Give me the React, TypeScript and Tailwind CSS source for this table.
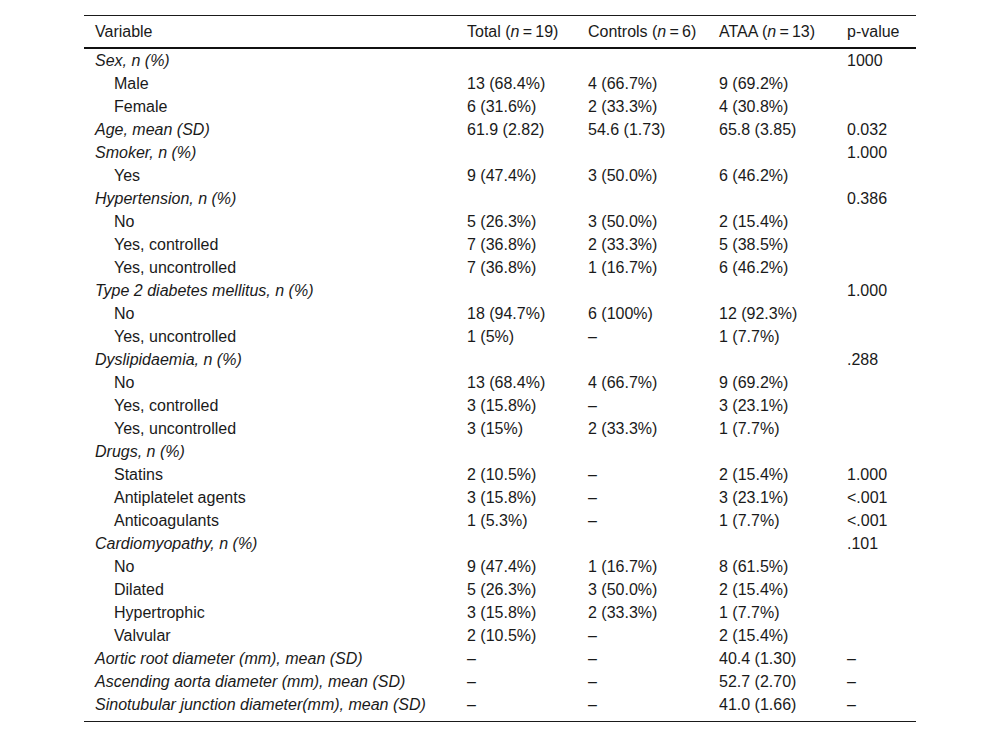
type Row = {
  label: string
  sub?: boolean
  cells: [string, string, string, string]
}

const rows: Row[] = [
  { label: 'Sex, n (%)', cells: ['', '', '', '1000'] },
  { label: 'Male', sub: true, cells: ['13 (68.4%)', '4 (66.7%)', '9 (69.2%)', ''] },
  { label: 'Female', sub: true, cells: ['6 (31.6%)', '2 (33.3%)', '4 (30.8%)', ''] },
  { label: 'Age, mean (SD)', cells: ['61.9 (2.82)', '54.6 (1.73)', '65.8 (3.85)', '0.032'] },
  { label: 'Smoker, n (%)', cells: ['', '', '', '1.000'] },
  { label: 'Yes', sub: true, cells: ['9 (47.4%)', '3 (50.0%)', '6 (46.2%)', ''] },
  { label: 'Hypertension, n (%)', cells: ['', '', '', '0.386'] },
  { label: 'No', sub: true, cells: ['5 (26.3%)', '3 (50.0%)', '2 (15.4%)', ''] },
  { label: 'Yes, controlled', sub: true, cells: ['7 (36.8%)', '2 (33.3%)', '5 (38.5%)', ''] },
  { label: 'Yes, uncontrolled', sub: true, cells: ['7 (36.8%)', '1 (16.7%)', '6 (46.2%)', ''] },
  { label: 'Type 2 diabetes mellitus, n (%)', cells: ['', '', '', '1.000'] },
  { label: 'No', sub: true, cells: ['18 (94.7%)', '6 (100%)', '12 (92.3%)', ''] },
  { label: 'Yes, uncontrolled', sub: true, cells: ['1 (5%)', '–', '1 (7.7%)', ''] },
  { label: 'Dyslipidaemia, n (%)', cells: ['', '', '', '.288'] },
  { label: 'No', sub: true, cells: ['13 (68.4%)', '4 (66.7%)', '9 (69.2%)', ''] },
  { label: 'Yes, controlled', sub: true, cells: ['3 (15.8%)', '–', '3 (23.1%)', ''] },
  { label: 'Yes, uncontrolled', sub: true, cells: ['3 (15%)', '2 (33.3%)', '1 (7.7%)', ''] },
  { label: 'Drugs, n (%)', cells: ['', '', '', ''] },
  { label: 'Statins', sub: true, cells: ['2 (10.5%)', '–', '2 (15.4%)', '1.000'] },
  { label: 'Antiplatelet agents', sub: true, cells: ['3 (15.8%)', '–', '3 (23.1%)', '<.001'] },
  { label: 'Anticoagulants', sub: true, cells: ['1 (5.3%)', '–', '1 (7.7%)', '<.001'] },
  { label: 'Cardiomyopathy, n (%)', cells: ['', '', '', '.101'] },
  { label: 'No', sub: true, cells: ['9 (47.4%)', '1 (16.7%)', '8 (61.5%)', ''] },
  { label: 'Dilated', sub: true, cells: ['5 (26.3%)', '3 (50.0%)', '2 (15.4%)', ''] },
  { label: 'Hypertrophic', sub: true, cells: ['3 (15.8%)', '2 (33.3%)', '1 (7.7%)', ''] },
  { label: 'Valvular', sub: true, cells: ['2 (10.5%)', '–', '2 (15.4%)', ''] },
  { label: 'Aortic root diameter (mm), mean (SD)', cells: ['–', '–', '40.4 (1.30)', '–'] },
  { label: 'Ascending aorta diameter (mm), mean (SD)', cells: ['–', '–', '52.7 (2.70)', '–'] },
  { label: 'Sinotubular junction diameter(mm), mean (SD)', cells: ['–', '–', '41.0 (1.66)', '–'] },
]

function Header({ name, n }: { name: string; n?: string }) {
  return (
    <th className="pl-[11px] pt-[2px] text-left font-normal">
      {name}
      {n && (
        <>
          {' ('}
          <i>n</i>
          {'\u2009=\u2009'}
          {n})
        </>
      )}
    </th>
  )
}

export default function App() {
  return (
    <div className="min-h-[737px] bg-white pt-[15px] pl-[84px] font-['Liberation_Sans',Arial,sans-serif] text-[16px] text-[#1a1a1a]">
      <table className="w-[832px] table-fixed border-collapse border-t border-b border-[#1a1a1a]">
        <colgroup>
          <col className="w-[372px]" />
          <col className="w-[121px]" />
          <col className="w-[131px]" />
          <col className="w-[128px]" />
          <col className="w-[80px]" />
        </colgroup>
        <thead>
          <tr className="h-[32px] border-b-2 border-[#111]">
            <Header name="Variable" />
            <Header name="Total" n="19" />
            <Header name="Controls" n="6" />
            <Header name="ATAA" n="13" />
            <Header name="p-value" />
          </tr>
        </thead>
        <tbody>
          {rows.map((r, i) => (
            <tr key={i} className={i === rows.length - 1 ? 'h-[29px] align-top' : 'h-[23px]'}>
              <td className={r.sub ? 'pl-[30px]' : 'pl-[11px] italic'}>
                <div className="leading-[23px]">{r.label}</div>
              </td>
              {r.cells.map((c, j) => (
                <td key={j} className="pl-[11px]">
                  <div className="leading-[23px]">{c}</div>
                </td>
              ))}
            </tr>
          ))}
        </tbody>
      </table>
    </div>
  )
}
